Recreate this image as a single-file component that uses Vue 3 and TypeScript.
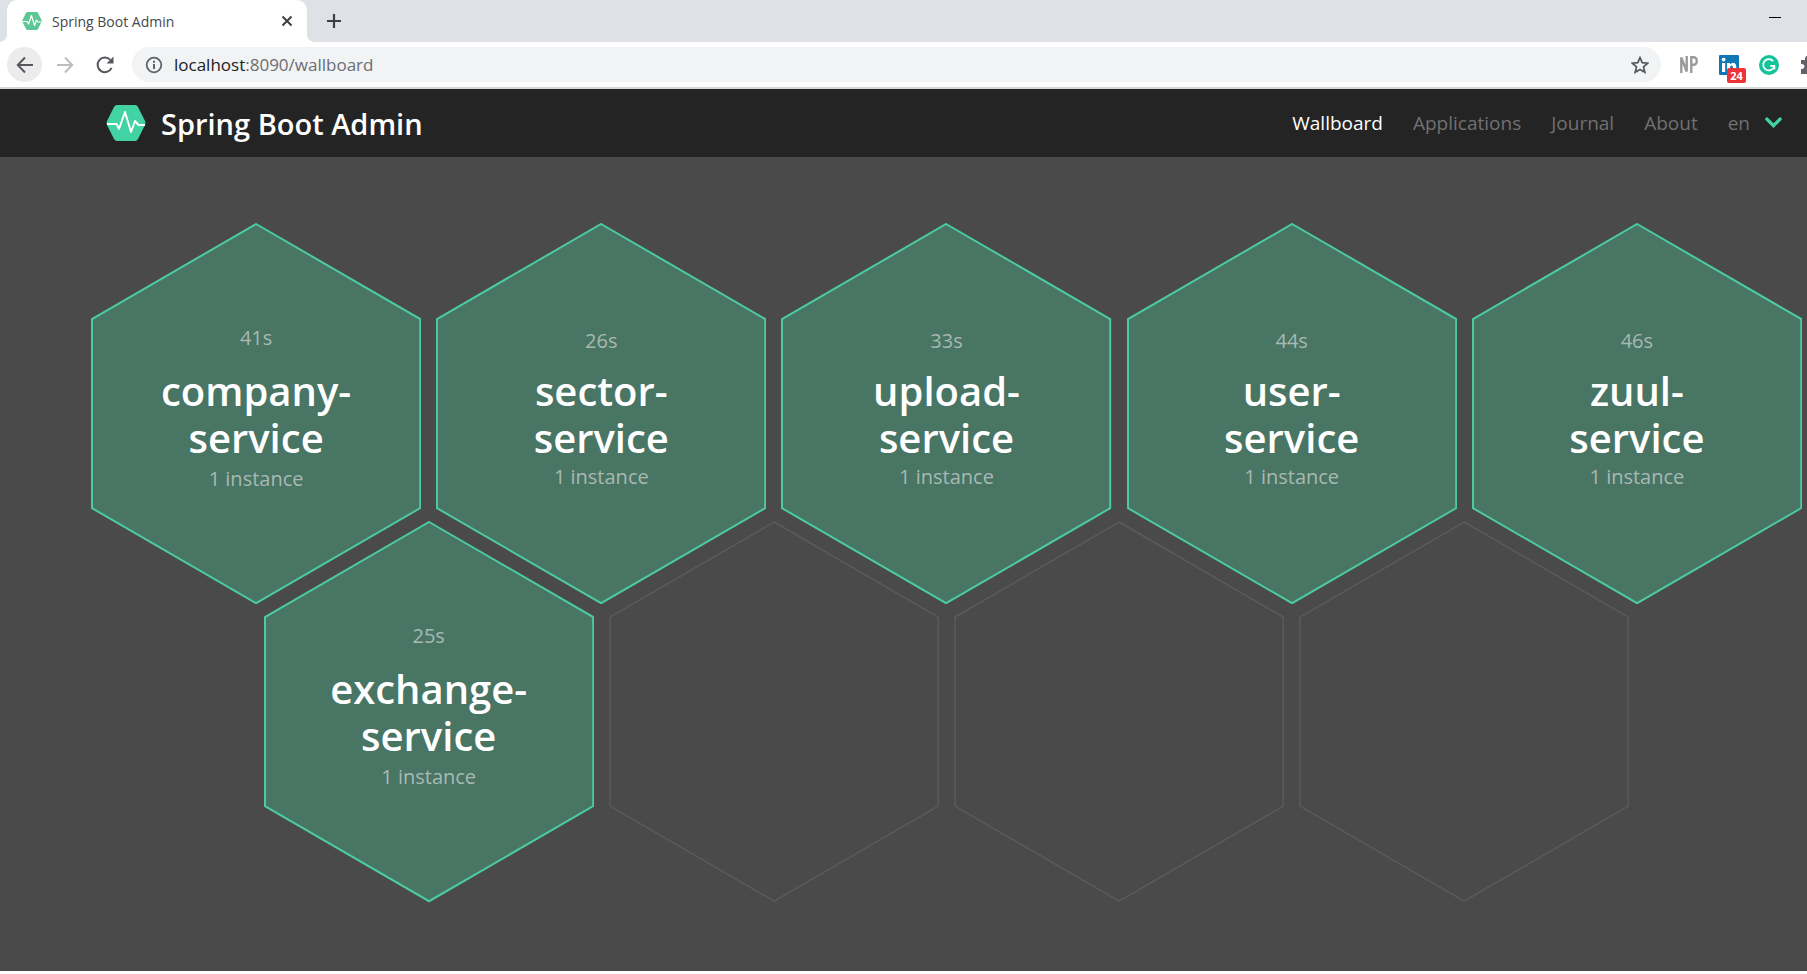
<script setup lang="ts">
interface Service {
  name: string
  time: string
  instances: string
}

const navLinks: string[] = ['Applications', 'Journal', 'About']

const rows: { shifted: boolean; cells: (Service | null)[] }[] = [
  {
    shifted: false,
    cells: [
      { name: 'company', time: '41s', instances: '1 instance' },
      { name: 'sector', time: '26s', instances: '1 instance' },
      { name: 'upload', time: '33s', instances: '1 instance' },
      { name: 'user', time: '44s', instances: '1 instance' },
      { name: 'zuul', time: '46s', instances: '1 instance' },
    ],
  },
  {
    shifted: true,
    cells: [{ name: 'exchange', time: '25s', instances: '1 instance' }, null, null, null],
  },
]

const isLong = (service: Service): boolean => service.name.length > 6
</script>

<template>
  <div class="window">
    <header class="chrome">
      <div class="tabs">
        <div class="tab">
          <svg class="favicon" viewBox="0 0 40 36" aria-hidden="true">
            <path d="M11 0h18q2 0 3 2l7 14q1 2 0 4l-7 14q-1 2-3 2H11q-2 0-3-2L1 20q-1-2 0-4L8 2q1-2 3-2z" fill="#5cc694" />
            <path d="M1 19h9l3 5 6-17 6 20 4-11 3 4h7" fill="none" stroke="#fff" stroke-width="2.4" stroke-linejoin="round" />
          </svg>
          <span class="tab-title">Spring Boot Admin</span>
          <button class="icon-button close" aria-label="Close tab">
            <svg viewBox="0 0 12 12"><path d="M1.5 1.5l9 9M10.5 1.5l-9 9" stroke="#3c4043" stroke-width="2" /></svg>
          </button>
        </div>
        <button class="icon-button new-tab" aria-label="New tab">
          <svg viewBox="0 0 16 16"><path d="M8 1v14M1 8h14" stroke="#3c4043" stroke-width="2.2" /></svg>
        </button>
        <button class="icon-button minimize" aria-label="Minimize">
          <svg viewBox="0 0 12 12"><path d="M0 6.5h12" stroke="#000" stroke-width="1" /></svg>
        </button>
      </div>
      <div class="toolbar">
        <button class="icon-button back" aria-label="Back">
          <svg viewBox="0 0 18 18"><path d="M17 9H2M9 1.5L1.8 9L9 16.5" fill="none" stroke="#55585c" stroke-width="2" /></svg>
        </button>
        <button class="icon-button forward" aria-label="Forward">
          <svg viewBox="0 0 18 18"><path d="M1 9h15M9 1.5L16.2 9L9 16.5" fill="none" stroke="#bcbdbf" stroke-width="2" /></svg>
        </button>
        <button class="icon-button reload" aria-label="Reload">
          <svg viewBox="0 0 18 18">
            <path d="M15.6 11.8A7.3 7.3 0 1 1 14.3 3.9" fill="none" stroke="#55585c" stroke-width="2" />
            <path d="M17.5 0.6V7.6H10.5z" fill="#55585c" />
          </svg>
        </button>
        <div class="address">
          <svg class="info" viewBox="0 0 18 18" aria-hidden="true">
            <circle cx="9" cy="9" r="7.3" fill="none" stroke="#5f6368" stroke-width="1.8" />
            <path d="M9 8v5M9 4.8v2" stroke="#5f6368" stroke-width="2" />
          </svg>
          <span class="url">localhost<span class="path">:8090/wallboard</span></span>
          <button class="icon-button star" aria-label="Bookmark">
            <svg viewBox="0 0 18 18">
              <path d="M9 1.6l2.2 5.1 5.5.5-4.2 3.6 1.3 5.4L9 13.4l-4.8 2.8 1.3-5.4L1.3 7.2l5.5-.5z" fill="none" stroke="#55585c" stroke-width="1.7" />
            </svg>
          </button>
        </div>
        <div class="extensions">
          <button class="icon-button ext np" aria-label="NP">
            <svg viewBox="0 0 18 17">
              <path d="M1.3 17V1.5L6.7 15.5V0M11.3 17V1.3h2.4a3 3 0 0 1 3 3v1.4a3 3 0 0 1-3 3h-2.4" fill="none" stroke="#9b9b9b" stroke-width="2.4" />
            </svg>
          </button>
          <button class="icon-button ext linkedin" aria-label="LinkedIn">
            <svg viewBox="0 0 20 20">
              <rect width="20" height="20" rx="1" fill="#0f77b5" />
              <circle cx="4.6" cy="4.6" r="1.9" fill="#fff" />
              <path d="M3 8h3.2v9H3zM8 8h3v1.300q3-3 5.500-.4.800 1 .8 3V17H14v-4.500q0-2-1.400-2t-1.500 2V17H8z" fill="#fff" />
            </svg>
            <span class="badge">24</span>
          </button>
          <button class="icon-button ext" aria-label="Grammarly">
            <svg viewBox="0 0 20 20">
              <circle cx="10" cy="10" r="10" fill="#15c39a" />
              <path d="M14.2 6.2A5.600 5.600 0 1 0 15.200 11.400M11.200 10.800h4.200v3.600" fill="none" stroke="#fff" stroke-width="1.700" />
            </svg>
          </button>
          <button class="icon-button ext" aria-label="Extensions">
            <svg viewBox="0 0 20 20">
              <path d="M2 5h4V3.500a2.500 2.500 0 0 1 5 0V5h6v5h1a2.500 2.500 0 0 1 0 5h-1v4H2v-5h1a2 2 0 0 0 0-5H2z" fill="#5f6368" />
            </svg>
          </button>
        </div>
      </div>
    </header>

    <nav class="navbar">
      <a class="brand" href="#">
        <svg viewBox="0 0 40 36" aria-hidden="true">
          <path d="M11 0h18q2 0 3 2l7 14q1 2 0 4l-7 14q-1 2-3 2H11q-2 0-3-2L1 20q-1-2 0-4L8 2q1-2 3-2z" fill="#42d3a5" />
          <path d="M1 19h9.500l2.500 5 6-17 6 20 4-11 3.500 4H39" fill="none" stroke="#fff" stroke-width="1.900" stroke-linejoin="round" />
        </svg>
        <span>Spring Boot Admin</span>
      </a>
      <div class="menu">
        <a class="active" href="#">Wallboard</a>
        <a v-for="link in navLinks" :key="link" href="#">{{ link }}</a>
        <button class="language">
          en
          <svg viewBox="0 0 16 11" aria-hidden="true">
            <path d="M1.800 2L8 8.200L14.200 2" fill="none" stroke="#42d3a5" stroke-width="3.200" stroke-linecap="round" />
          </svg>
        </button>
      </div>
    </nav>

    <main class="board">
      <div v-for="(row, r) in rows" :key="r" class="row" :class="{ shifted: row.shifted }">
        <component
          :is="cell ? 'a' : 'div'"
          v-for="(cell, c) in row.cells"
          :key="c"
          class="hex"
          :class="{ up: cell }"
          :href="cell ? '#' : undefined"
        >
          <svg viewBox="0 0 330 381" aria-hidden="true">
            <polygon points="165,1 329,96 329,285 165,380 1,285 1,96" />
          </svg>
          <div v-if="cell" class="content" :class="{ long: isLong(cell) }">
            <span class="meta">{{ cell.time }}</span>
            <h2>{{ cell.name }}-<br />service</h2>
            <span class="meta">{{ cell.instances }}</span>
          </div>
        </component>
      </div>
    </main>
  </div>
</template>

<style>
body {
  background: #fff;
}
</style>

<style scoped>
.window {
  display: flex;
  flex-direction: column;
  min-height: 100vh;
  box-sizing: border-box;
  padding-bottom: 3px;
  overflow: hidden;
  font-family: "Open Sans", "Noto Sans", sans-serif;
}

a {
  color: inherit;
  text-decoration: none;
}

svg {
  display: block;
  width: 100%;
}

.icon-button {
  display: flex;
  flex: none;
  align-items: center;
  justify-content: center;
  padding: 0;
  border: 0;
  background: none;
}

.chrome {
  border-bottom: 2px solid #d6d7d9;
}

.tabs {
  display: flex;
  align-items: center;
  height: 42px;
  padding-left: 7px;
  background: #dee1e6;
}

.tab {
  position: relative;
  display: flex;
  align-items: center;
  box-sizing: border-box;
  width: 300px;
  height: 42px;
  padding: 0 14px 0 15px;
  border-radius: 10px 10px 0 0;
  background: #fff;
}

/* Concave feet where the tab meets the toolbar */
.tab::before,
.tab::after {
  position: absolute;
  bottom: 0;
  width: 8px;
  height: 8px;
  content: "";
}

.tab::before {
  right: 100%;
  background: radial-gradient(circle at 0 0, #dee1e6 8px, #fff 8px);
}

.tab::after {
  left: 100%;
  background: radial-gradient(circle at 100% 0, #dee1e6 8px, #fff 8px);
}

.favicon {
  width: 20px;
}

.tab-title {
  flex: 1;
  margin-left: 10px;
  color: #45484c;
  font-size: 14px;
}

.close {
  width: 12px;
}

.new-tab {
  width: 16px;
  margin-left: 19px;
}

.minimize {
  width: 12px;
  margin: 0 26px 8px auto;
}

.toolbar {
  display: flex;
  align-items: center;
  height: 45px;
  padding-left: 7px;
  background: #fff;
}

.back {
  width: 35px;
  height: 35px;
  border-radius: 50%;
  background: #ececed;
}

.back svg,
.forward svg,
.reload svg,
.star svg {
  width: 18px;
}

.forward {
  margin-left: 14px;
}

.reload {
  margin-left: 22px;
}

.address {
  display: flex;
  flex: 1;
  align-items: center;
  height: 35px;
  margin-left: 18px;
  padding: 0 12px 0 13px;
  border-radius: 18px;
  background: #f1f3f4;
}

.info {
  width: 18px;
}

.url {
  flex: 1;
  margin-left: 11px;
  color: #202124;
  font-size: 17px;
}

.path {
  color: #6a6e72;
}

.extensions {
  display: flex;
  flex: none;
  gap: 20px;
  align-items: center;
  width: 128px;
  height: 45px;
  margin-left: 18px;
  overflow: hidden;
}

.ext {
  position: relative;
  width: 20px;
}

.np svg {
  width: 18px;
}

.badge {
  position: absolute;
  top: 13px;
  left: 8px;
  width: 19px;
  border-radius: 2px;
  background: #ee3338;
  color: #fff;
  font: 700 11px/15px "Open Sans", sans-serif;
}

.navbar {
  display: flex;
  align-items: center;
  justify-content: space-between;
  height: 68px;
  padding: 0 25px 0 106px;
  background: #242424;
}

.brand {
  display: flex;
  gap: 15px;
  align-items: center;
  color: #fff;
  font-size: 29px;
  font-weight: 600;
}

.brand svg {
  width: 40px;
}

.menu {
  display: flex;
  gap: 30px;
  align-items: center;
  color: #717171;
  font-size: 19px;
}

.active {
  color: #fff;
}

.language {
  display: flex;
  gap: 15px;
  align-items: center;
  padding: 0;
  border: 0;
  background: none;
  color: inherit;
  font: inherit;
}

.language svg {
  width: 17px;
}

.board {
  flex: 1;
  padding: 66px 5px 67px 91px;
  background: #4a4a4a;
}

.row {
  display: grid;
  grid-template-columns: repeat(10, 1fr);
  column-gap: 15px;
}

.row + .row {
  margin-top: -4.85%;
}

.hex {
  display: grid;
  grid-column: span 2;
  align-items: center;
  pointer-events: none;
}

.shifted .hex:first-child {
  grid-column: 2 / span 2;
}

.hex > * {
  grid-area: 1 / 1;
}

polygon {
  fill: none;
  stroke: #5b5b5b;
  stroke-width: 1.5;
  pointer-events: auto;
}

.up polygon {
  fill: #487564;
  stroke: #4ccba0;
  stroke-width: 2;
}

.content {
  display: flex;
  flex-direction: column;
  align-items: center;
  padding-bottom: 10px;
  color: #fff;
  text-align: center;
}

.meta {
  color: #a9b9b2;
  font-size: 20px;
  line-height: 28px;
}

h2 {
  margin: 12px 0 2px;
  font-size: 40px;
  font-weight: 600;
  line-height: 47px;
}

.long h2 {
  margin: 15px 0 4px;
}
</style>
